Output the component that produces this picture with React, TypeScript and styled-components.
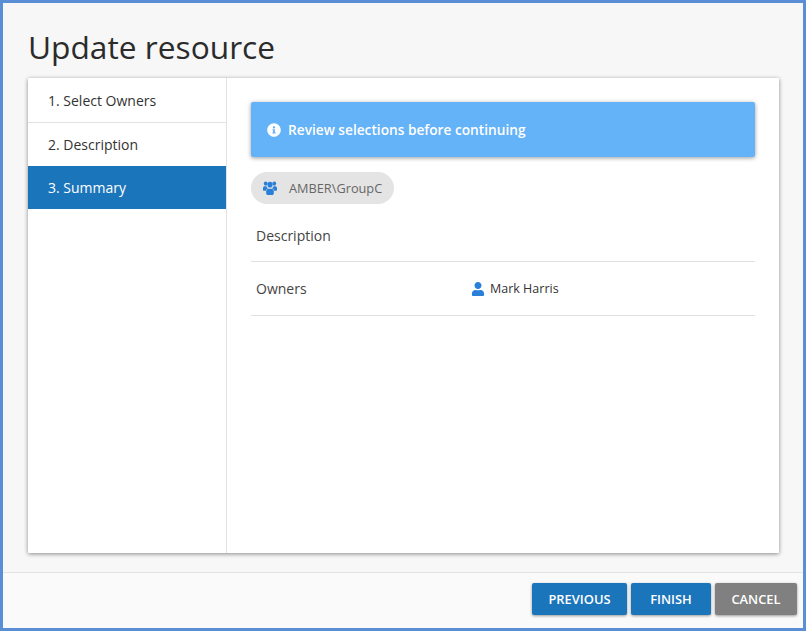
import React from "react";
import styled, { createGlobalStyle } from "styled-components";
import { FaInfoCircle, FaUser } from "react-icons/fa";

const Global = createGlobalStyle`
  html, body { margin: 0; padding: 0; height: 100%; }
  body { font-family: "Open Sans", "Noto Sans", sans-serif; background: #5b8fd5; }
  #root { height: 100%; }
`;

const Dialog = styled.div`
  box-sizing: border-box;
  width: 806px;
  height: 631px;
  border: 3px solid #5b8fd5;
  background: #f7f7f7;
  display: flex;
  flex-direction: column;
  overflow: hidden;
`;

const Title = styled.h1`
  margin: 0;
  height: 75px;
  box-sizing: border-box;
  padding: 21px 0 0 25px;
  font-size: 31.7px;
  line-height: 46px;
  font-weight: 400;
  color: #2b2b2b;
`;

const Body = styled.div`
  height: 494px;
  padding: 0 24px 19px 25px;
  box-sizing: border-box;
  flex: none;
`;

const Paper = styled.div`
  height: 475px;
  background: #fff;
  display: flex;
  box-shadow: 0 1px 4px rgba(0, 0, 0, 0.45);
  border-radius: 1px;
`;

const Sidebar = styled.nav`
  width: 199px;
  flex: none;
  box-sizing: border-box;
  border-right: 1px solid #e2e2e2;
  display: flex;
  flex-direction: column;
`;

const Step = styled.div<{ $active?: boolean; $divider?: boolean }>`
  height: ${(p) => (p.$divider ? 45 : 43)}px;
  box-sizing: border-box;
  padding-left: 20px;
  display: flex;
  align-items: center;
  font-size: 14px;
  color: ${(p) => (p.$active ? "#fff" : "#333")};
  background: ${(p) => (p.$active ? "#1b75bb" : "transparent")};
  border-bottom: ${(p) => (p.$divider ? "1px solid #e2e2e2" : "none")};
`;

const Content = styled.main`
  flex: 1;
  box-sizing: border-box;
  padding: 24px 24px 0 24px;
  display: flex;
  flex-direction: column;
  min-width: 0;
`;

const Banner = styled.div`
  height: 55px;
  flex: none;
  background: #64b2f7;
  color: #fff;
  border-radius: 2px;
  box-shadow: 0 1px 4px rgba(0, 0, 0, 0.4);
  display: flex;
  align-items: center;
  padding-left: 16px;
  gap: 7px;
  font-size: 13.7px;
  font-weight: 600;
  svg { font-size: 14px; flex: none; }
`;

const Chip = styled.div`
  align-self: flex-start;
  margin-top: 15px;
  height: 32px;
  border-radius: 16px;
  background: #e4e4e4;
  display: flex;
  align-items: center;
  padding: 0 12px;
  gap: 12px;
  font-size: 12.75px;
  color: #666;
`;

const GroupIcon = styled.svg`
  width: 14px;
  height: 14px;
  flex: none;
  fill: #2a80d8;
`;

const Row = styled.div<{ $height: number; $offset?: number }>`
  height: ${(p) => p.$height}px;
  box-sizing: border-box;
  border-bottom: 1px solid #e0e0e0;
  display: flex;
  align-items: center;
  padding: ${(p) => p.$offset ?? 0}px 0 0 5px;
  font-size: 14px;
  color: #444;
`;

const RowLabel = styled.div`
  width: 215px;
  flex: none;
`;

const Person = styled.div`
  display: flex;
  align-items: center;
  gap: 5px;
  font-size: 12.5px;
  color: #333;
  svg { color: #2a80d8; font-size: 14px; flex: none; }
`;

const Footer = styled.footer`
  flex: 1;
  border-top: 1px solid #e4e4e4;
  background: #fafafa;
  display: flex;
  justify-content: flex-end;
  align-items: flex-start;
  gap: 4px;
  padding: 10px 6px 0 0;
`;

const Button = styled.button<{ $width: number; $muted?: boolean }>`
  width: ${(p) => p.$width}px;
  height: 32px;
  border: none;
  border-radius: 2px;
  padding: 0;
  background: ${(p) => (p.$muted ? "#808080" : "#1b75bb")};
  color: #fff;
  font-family: inherit;
  font-size: 12.9px;
  font-weight: 600;
  box-shadow: 0 1px 3px rgba(0, 0, 0, 0.4);
`;

function Group() {
  return (
    <GroupIcon viewBox="0 0 14 13" preserveAspectRatio="none" aria-hidden="true">
      <circle cx="2.7" cy="2.4" r="1.9" />
      <circle cx="11.3" cy="2.4" r="1.9" />
      <circle cx="7" cy="3.4" r="2.6" />
      <path d="M0 8.2V6.6C0 5.4.9 4.8 2 4.8h1.4c.3.9.9 1.6 1.6 2-1.1.4-1.9 1.2-2.2 2.3H.9C.4 9.1 0 8.7 0 8.2z" />
      <path d="M14 8.2V6.6c0-1.2-.9-1.8-2-1.8h-1.4c-.3.9-.9 1.6-1.6 2 1.1.4 1.9 1.2 2.2 2.3h1.9c.5 0 .9-.4.9-.9z" />
      <path d="M3.2 11.7V9.6c0-1.3 1-2.3 2.3-2.3h3c1.3 0 2.3 1 2.3 2.3v2.1c0 .7-.6 1.3-1.3 1.3h-5c-.7 0-1.3-.6-1.3-1.3z" />
    </GroupIcon>
  );
}

export default function App() {
  return (
    <>
      <Global />
      <Dialog>
        <Title>Update resource</Title>
        <Body>
          <Paper>
            <Sidebar>
              <Step $divider>1. Select Owners</Step>
              <Step>2. Description</Step>
              <Step $active>3. Summary</Step>
            </Sidebar>
            <Content>
              <Banner>
                <FaInfoCircle />
                Review selections before continuing
              </Banner>
              <Chip>
                <Group />
                AMBER\GroupC
              </Chip>
              <Row $height={58} $offset={5}>
                <RowLabel>Description</RowLabel>
              </Row>
              <Row $height={54}>
                <RowLabel>Owners</RowLabel>
                <Person>
                  <FaUser />
                  Mark Harris
                </Person>
              </Row>
            </Content>
          </Paper>
        </Body>
        <Footer>
          <Button $width={95}>PREVIOUS</Button>
          <Button $width={80}>FINISH</Button>
          <Button $width={82} $muted>CANCEL</Button>
        </Footer>
      </Dialog>
    </>
  );
}
